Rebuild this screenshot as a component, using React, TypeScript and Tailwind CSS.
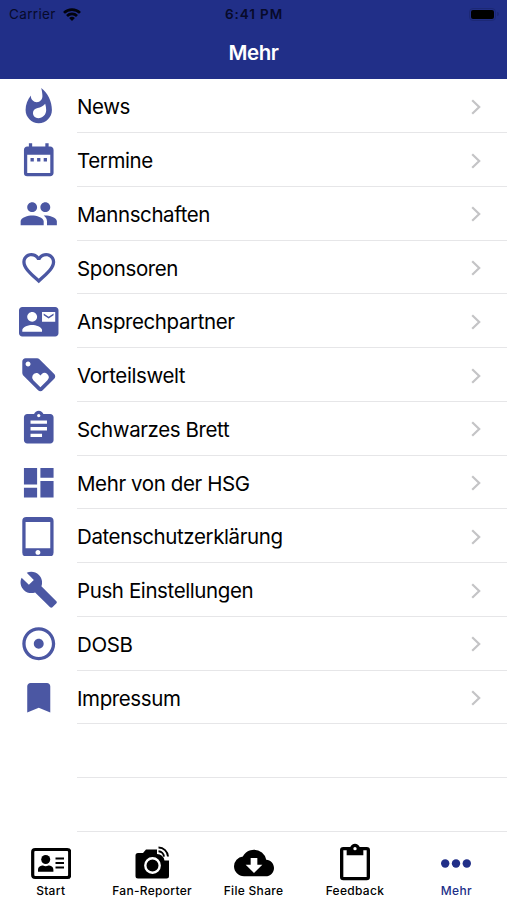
import type { ReactNode } from 'react';
import {
  MdAdjust,
  MdAssignment,
  MdBookmark,
  MdCloudDownload,
  MdContactMail,
  MdDashboard,
  MdDateRange,
  MdFavoriteBorder,
  MdLoyalty,
  MdPeople,
  MdTabletMac,
  MdWhatshot,
} from 'react-icons/md';

function WrenchIcon({ className }: { className?: string }) {
  return (
    <svg className={className} viewBox="0 0 24 24" fill="currentColor">
      <path d="M22.7 19l-9.1-9.1c.9-2.3.4-5-1.5-6.9-2-2-5-2.4-7.4-1.3L9 6 6 9 1.6 4.7C.4 7.1.9 10.1 2.9 12.1c1.9 1.9 4.6 2.4 6.9 1.5l9.1 9.1c.4.4 1 .4 1.4 0l2.3-2.3c.5-.4.5-1.1.1-1.4z" />
    </svg>
  );
}

const items = [
  { label: 'News', icon: MdWhatshot },
  { label: 'Termine', icon: MdDateRange },
  { label: 'Mannschaften', icon: MdPeople },
  { label: 'Sponsoren', icon: MdFavoriteBorder },
  { label: 'Ansprechpartner', icon: MdContactMail },
  { label: 'Vorteilswelt', icon: MdLoyalty },
  { label: 'Schwarzes Brett', icon: MdAssignment },
  { label: 'Mehr von der HSG', icon: MdDashboard },
  { label: 'Datenschutzerklärung', icon: MdTabletMac },
  { label: 'Push Einstellungen', icon: WrenchIcon },
  { label: 'DOSB', icon: MdAdjust },
  { label: 'Impressum', icon: MdBookmark },
];

function StatusBar() {
  return (
    <div className="grid h-[28px] grid-cols-3 items-center pr-[8px] pl-[9px] text-[13.5px] text-[#070a2a]">
      <div className="flex items-center gap-[7px]">
        <span className="tracking-[0.35px]">Carrier</span>
        <svg width="18" height="13" viewBox="0 0 18 13" fill="none" stroke="#02030c" strokeWidth="2.7">
          <path d="M1 4.9a11.4 11.4 0 0 1 16 0" />
          <path d="M4 8a7.1 7.1 0 0 1 10 0" />
          <path d="M9 13 6.1 10.1a4.1 4.1 0 0 1 5.8 0Z" fill="#02030c" stroke="none" />
        </svg>
      </div>
      <div className="text-center font-semibold tracking-[0.9px]">6:41 PM</div>
      <div className="flex items-center justify-end">
        <div className="h-[13px] w-[27px] rounded-[4px] border border-[#1c2875] p-[1px]">
          <div className="h-full w-full rounded-[2px] bg-black" />
        </div>
        <div className="ml-[1px] h-[4px] w-[1.5px] rounded-r bg-[#1c2875]" />
      </div>
    </div>
  );
}

function Chevron() {
  return (
    <svg width="10" height="16" viewBox="0 0 10 16" fill="none" stroke="#c4c4c6" strokeWidth="2.2">
      <path d="M1.2 1.2 8.2 8l-7 6.8" />
    </svg>
  );
}

function CardIcon() {
  return (
    <svg width="40" height="40" viewBox="0 0 40 40">
      <rect x="1.7" y="6.5" width="37" height="28" rx="2.5" fill="none" stroke="#000" strokeWidth="3.2" />
      <circle cx="14.7" cy="16.5" r="4.5" />
      <path d="M7 28.8v-2c0-3 3-4.3 5-4.3q2.7 1.3 5.4 0c2.3 0 5 1.3 5 4.3v2Z" />
      <path d="M24.5 15.5h8.5M24.5 20h8.5M24.5 24.5h8.5" stroke="#000" strokeWidth="2.2" />
    </svg>
  );
}

function CameraIcon() {
  return (
    <svg width="40" height="40" viewBox="0 0 40 40">
      <path d="M6 10h5l3-3.500h11V11q6 0 7.500 6.500H37V33a2.500 2.500 0 0 1-2.500 2.500H6A2.500 2.500 0 0 1 3.500 33V12.500A2.500 2.500 0 0 1 6 10Z" />
      <circle cx="20.5" cy="22.5" r="7.2" fill="none" stroke="#fff" strokeWidth="2.4" />
      <g fill="none" stroke="#000" strokeWidth="1.9">
        <path d="M26.500 8.200a6 6 0 0 1 5.500 5.500M26.500 4.500a9.500 9.500 0 0 1 9.500 9" />
      </g>
    </svg>
  );
}

function ClipboardIcon() {
  return (
    <svg className="-mt-px mb-px" width="40" height="40" viewBox="0 0 24 24">
      <path d="M19 3h-4.180C14.400 1.840 13.300 1 12 1s-2.400.84-2.820 2H5a2 2 0 0 0-2 2v16a2 2 0 0 0 2 2h14a2 2 0 0 0 2-2V5a2 2 0 0 0-2-2Zm-7 0a1 1 0 1 1 0 2 1 1 0 0 1 0-2Zm7 18H5V5h2v3h10V5h2Z" />
    </svg>
  );
}

function DotsIcon() {
  return (
    <svg width="40" height="40" viewBox="0 0 40 40" fill="currentColor">
      <circle cx="9.2" cy="20.5" r="4.2" />
      <circle cx="20" cy="20.5" r="4.2" />
      <circle cx="30.8" cy="20.5" r="4.2" />
    </svg>
  );
}

function Tab({ label, active, children }: { label: string; active?: boolean; children: ReactNode }) {
  return (
    <div className={`flex flex-1 flex-col items-center ${active ? 'text-[#212f88]' : 'text-black'}`}>
      {children}
      <span className="mt-[1px] text-[12px] leading-[14px] font-medium tracking-[0.3px] whitespace-nowrap">{label}</span>
    </div>
  );
}

export default function App() {
  return (
    <div className="flex h-[900px] w-full flex-col overflow-hidden bg-white font-[Inter,sans-serif]">
      <header className="h-[79.4px] shrink-0 bg-[#212f88]">
        <StatusBar />
        <h1 className="pt-[11px] text-center text-[20.5px] leading-[28px] font-semibold tracking-[-0.4px] text-white">
          Mehr
        </h1>
      </header>

      <ul className="shrink-0">
        {items.map(({ label, icon: Icon }) => (
          <li key={label} className="flex h-[53.75px]">
            <div className="flex w-[77px] items-center pl-[19px]">
              <Icon className="size-[39.5px] text-[#4b57a3]" />
            </div>
            <div className="flex flex-1 items-center justify-between border-b border-[#e6e6e8] pt-[2px] pr-[26px]">
              <span className="pt-px text-[20.5px] leading-[28px] tracking-[-0.4px] text-black">{label}</span>
              <Chevron />
            </div>
          </li>
        ))}
        <li className="ml-[77px] h-[53.75px] border-b border-[#e6e6e8]" />
        <li className="ml-[77px] h-[53.75px] border-b border-[#e6e6e8]" />
      </ul>

      <nav className="flex pt-[11px]">
        <Tab label="Start">
          <CardIcon />
        </Tab>
        <Tab label="Fan-Reporter">
          <CameraIcon />
        </Tab>
        <Tab label="File Share">
          <MdCloudDownload className="size-[40px]" />
        </Tab>
        <Tab label="Feedback">
          <ClipboardIcon />
        </Tab>
        <Tab label="Mehr" active>
          <DotsIcon />
        </Tab>
      </nav>
    </div>
  );
}
